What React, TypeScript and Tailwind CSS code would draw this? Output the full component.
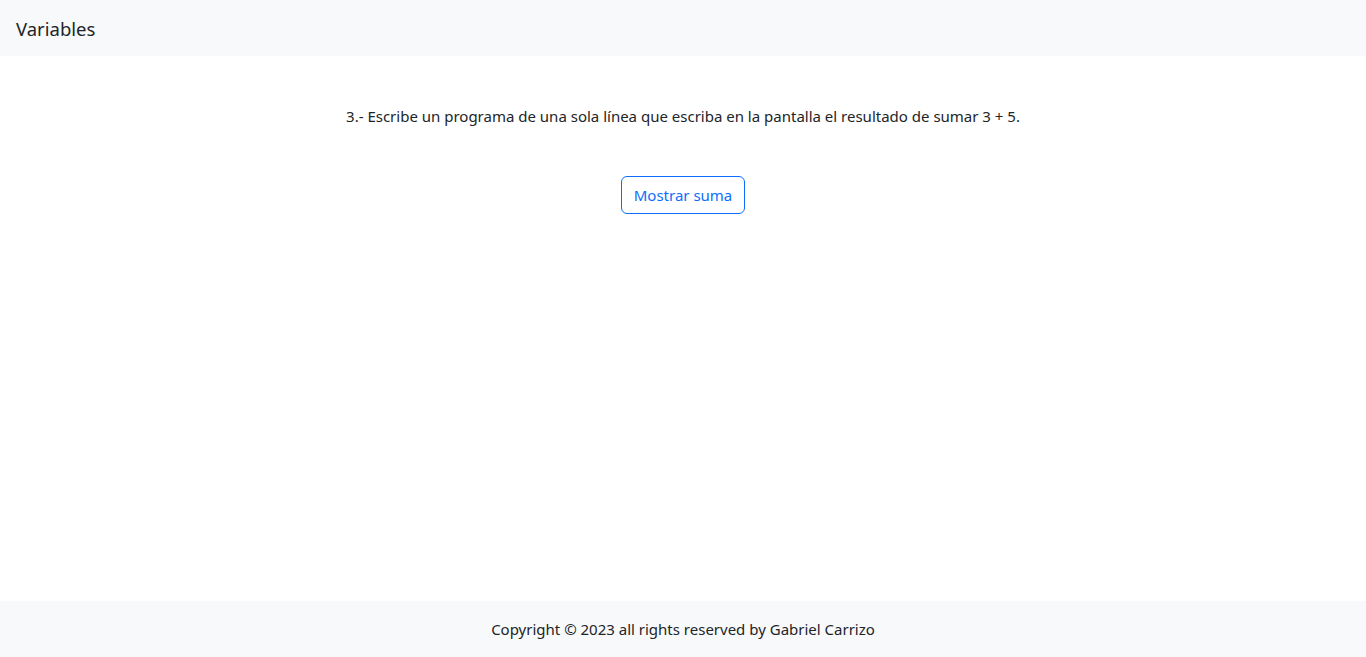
export default function App() {
  const font = { fontFamily: '"Noto Sans", "Open Sans", sans-serif' };
  return (
    <div className="min-h-screen flex flex-col bg-white text-[#212529]" style={font}>
      <header className="h-[56px] bg-[#f8f9fa] flex items-center px-4 shrink-0">
        <span className="text-[18.5px] leading-[30px] pt-[2px]">Variables</span>
      </header>
      <main className="flex-1 flex flex-col items-center pt-12">
        <p className="text-[15px] leading-6">3.- Escribe un programa de una sola línea que escriba en la pantalla el resultado de sumar 3 + 5.</p>
        <button className="mt-12 h-[38px] px-3 border border-[#0d6efd] text-[#0d6efd] rounded-[6px] text-[15px] leading-6 bg-white">
          Mostrar suma
        </button>
      </main>
      <footer className="h-[56px] bg-[#f8f9fa] flex items-center justify-center shrink-0">
        <span className="text-[15px] leading-6">Copyright © 2023 all rights reserved by Gabriel Carrizo</span>
      </footer>
    </div>
  );
}
